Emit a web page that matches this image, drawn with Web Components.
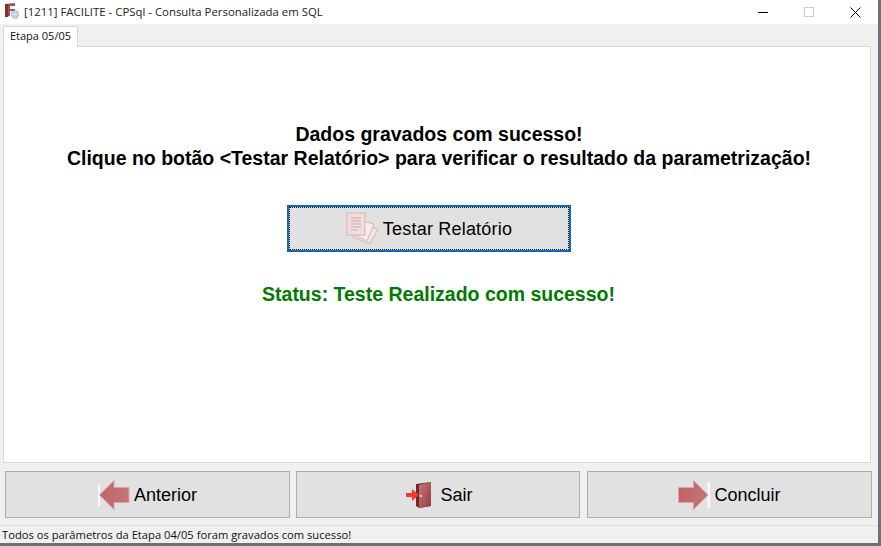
<!DOCTYPE html>
<html lang="pt"><head><meta charset="utf-8"><title>CPSql</title>
<style>html,body{margin:0;padding:0;background:#e9e9e9;overflow:hidden}</style></head>
<body>
<app-window>
  <title-bar slot="title" text="[1211] FACILITE - CPSql - Consulta Personalizada em SQL"></title-bar>
  <tab-panel label="Etapa 05/05">
    <div style="height:75px"></div>
    <big-message style="margin:0 -2px 0 2px">Dados gravados com sucesso!<br>Clique no botão &lt;Testar Relatório&gt; para verificar o resultado da parametrização!</big-message>
    <action-button focused icon="docs" style="width:284px;height:47px;margin:35px 0 0 283px;letter-spacing:.2px">Testar Relatório</action-button>
    <big-message style="margin:30px -2px 0 1px;--c:#007a00;">Status: Teste Realizado com sucesso!</big-message>
  </tab-panel>
  <button-row>
    <action-button icon="left">Anterior</action-button>
    <action-button icon="door" style="margin-right:1px">Sair</action-button>
    <action-button icon="right">Concluir</action-button>
  </button-row>
  <status-bar>Todos os parâmetros da Etapa 04/05 foram gravados com sucesso!</status-bar>
</app-window>
<script>
const def=(n,css,html)=>customElements.define(n,class extends HTMLElement{
  connectedCallback(){ if(this.shadowRoot) return; const s=this.attachShadow({mode:'open'});
    s.innerHTML='<style>'+css+'</style>'+(typeof html==='function'?html(this):html); }
});
def('app-window',`:host{display:flex;flex-direction:column;box-sizing:border-box;width:881px;height:546px;background:#f0f0f0;border-right:3px solid #6d7278;border-bottom:3px solid #6d7278}`,
 `<slot name="title"></slot><slot></slot>`);
def('title-bar',`:host{display:flex;align-items:center;height:24px;flex:none;background:#fff;font:12px "Open Sans","Noto Sans",sans-serif;color:#222}
 .t{margin-left:4px;font-size:11.4px;position:relative;top:-1px}
 .ic{margin-left:3px;flex:none}
 .ctl{margin-left:auto;display:flex}
 .ctl div{width:46px;height:24px;display:flex;align-items:center;justify-content:center}`,
 e=>`<svg class="ic" width="17" height="17" viewBox="0 0 17 17" style="position:relative;top:-2px"><path d="M2 2l10-1v3H7v3h5v2H7v5l-5 1z" fill="#a05050"/><path d="M2 2h3v13H2z" fill="#7e3434"/><circle cx="12" cy="12.5" r="4.2" fill="#a9bcd3"/><path d="M8 12.5h8M12 8.5v8M9 10l6 5M15 10l-6 5" stroke="#e8eef5" stroke-width=".8"/></svg>
 <span class="t">${e.getAttribute('text')}</span>
 <div class="ctl">
 <div><svg width="10" height="10"><path d="M0 5.5h10" stroke="#000"/></svg></div>
 <div><svg width="10" height="10"><rect x=".5" y=".5" width="9" height="9" fill="none" stroke="#ccc"/></svg></div>
 <div><svg width="11" height="11"><path d="M.5.5l10 10M10.5.5l-10 10" stroke="#000" fill="none"/></svg></div></div>`);
def('tab-panel',`:host{display:flex;flex-direction:column;flex:none;margin:2px 7px 0 3px;height:437px}
 .tab{box-sizing:border-box;width:75px;height:21px;background:#fff;border:1px solid #d9d9d9;border-bottom:0;font:11px "Open Sans","Noto Sans",sans-serif;color:#111;text-align:center;line-height:18px;position:relative;margin-bottom:-1px;z-index:1}
 .p{box-sizing:border-box;flex:1;background:#fff;border:1px solid #d9d9d9;display:flex;flex-direction:column;text-align:center}`,
 e=>`<div class="tab">${e.getAttribute('label')}</div><div class="p"><slot></slot></div>`);
def('big-message',`:host{display:block;font:bold 19.5px/24px "Liberation Sans",Arial,sans-serif;color:var(--c,#000);text-align:center}`,`<slot></slot>`);
def('button-row',`:host{display:grid;grid-template-columns:285px 285px 285px;column-gap:6px;margin:8px 0 0 5px;height:47px;flex:none}`,`<slot></slot>`);
const grad=id=>`<defs><linearGradient id="${id}" x1="0" y1="0" x2="1" y2="0"><stop offset="0" stop-color="#bd6464"/><stop offset="1" stop-color="#c67676"/></linearGradient></defs>`;
const icons={
 left:`<svg width="32" height="32" viewBox="0 0 32 32">${grad('g')}<rect x="0" y="5" width="2" height="22" fill="#f8f8f8"/><path d="M1.5 16 16 1.5v7h15v15H16v7z" fill="url(#g)" stroke="#d8a6a6"/></svg>`,
 right:`<svg width="32" height="32" viewBox="0 0 32 32">${grad('h')}<rect x="29.5" y="3" width="2.5" height="26" fill="#f8f8f8"/><path d="M30 16 15.5 1.5v7H.5v15h15v7z" fill="url(#h)" stroke="#d8a6a6"/></svg>`,
 door:`<svg width="27" height="28" viewBox="0 0 27 28" style="margin:0 4px 0 2px"><defs><linearGradient id="d" x1="0" y1="0" x2="1" y2="1"><stop offset="0" stop-color="#c97a7a"/><stop offset="1" stop-color="#94393c"/></linearGradient></defs><path d="M11 3 26 1v24l-12 2-3-2z" fill="#6f2a2c"/><path d="M14 4 26 1v24l-12 2z" fill="url(#d)"/><circle cx="16" cy="15" r=".9" fill="#fff"/><path d="M1 12h6V8l7 6-7 6v-4H1z" fill="#f43a2a"/></svg>`,
 docs:`<svg width="33" height="33" viewBox="0 0 33 33"><g stroke="#d5b5b5"><path d="M13 11 32 17 24 32 7 25z" fill="#f3e4e4"/><path d="M10 7 28 12 21 29 5 21z" fill="#f7ecec"/><rect x="1" y="1" width="18" height="22" fill="#f2dcdc"/></g><path d="M5 6h10M5 9h10M5 12h10M5 15h10M5 18h7" stroke="#c9abab"/></svg>`};
def('action-button',`:host{display:flex;box-sizing:border-box;align-items:center;justify-content:center;background:#e1e1e1;border:1px solid #adadad;font:18px "Liberation Sans",Arial,sans-serif;color:#000}
 :host([focused]){border:2px solid #0b6cb5}
 .f{flex:1;align-self:stretch;display:flex;align-items:center;justify-content:center;gap:4px}
 :host([focused]) .f{outline:1px dotted #111;outline-offset:-1px}
 span{padding-top:2px}
 svg{display:block}`,
 e=>`<div class="f">${icons[e.getAttribute('icon')]}<span><slot></slot></span></div>`);
def('status-bar',`:host{display:block;margin-top:7px;flex:1;border-top:1px solid #dcdcdc;padding-left:2px;font:11.2px/17px "Open Sans","Noto Sans",sans-serif;color:#111}`,`<slot></slot>`);
</script>
</body></html>
